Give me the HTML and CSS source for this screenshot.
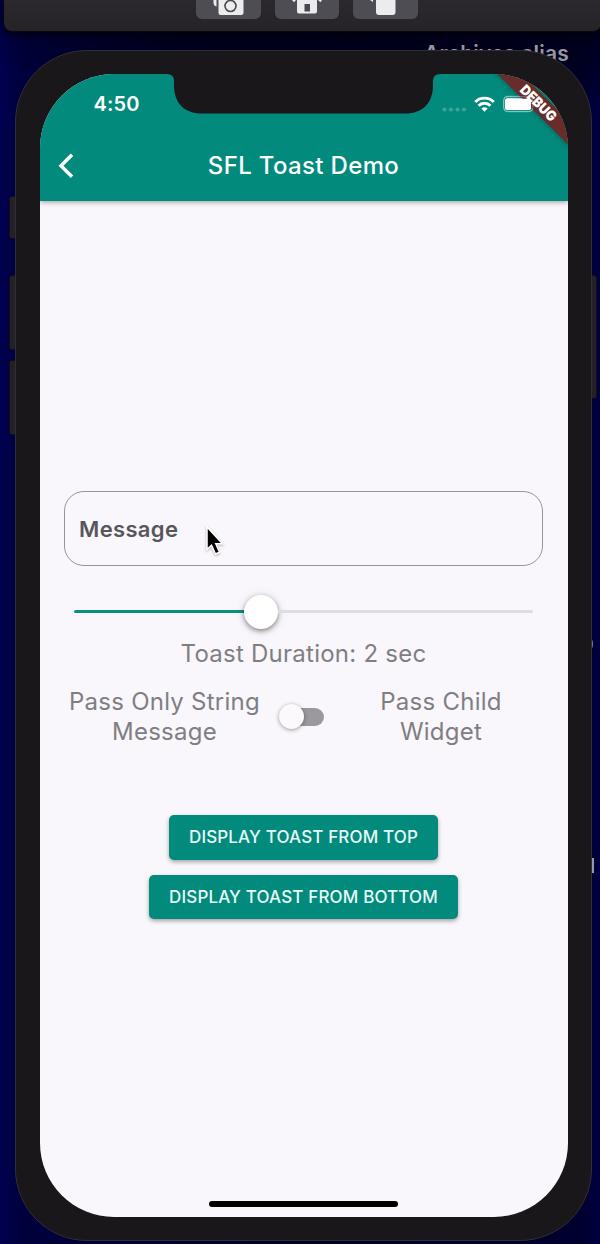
FILE: index.html
```html
<!DOCTYPE html>
<html lang="en">
<head>
<meta charset="utf-8">
<title>SFL Toast Demo</title>
<link rel="stylesheet" href="styles.css">
</head>
<body>
<div class="desktop">
  <span class="desktop-label">Archives alias</span>
  <span class="desktop-hint hint-dot"></span>
  <span class="desktop-hint hint-bar"></span>

  <div class="sim-toolbar">
    <span class="tool"><svg width="65" height="20" viewBox="0 0 65 20"><path d="M17.500 0h3v6.500q-3-.5-3-4zM22.500 0h25v12.500q0 2.500-2.500 2.500h-20q-2.500 0-2.500-2.500z" fill="#ececef"/><circle cx="34.500" cy="6" r="5.500" fill="none" stroke="#4b4950" stroke-width="1.600"/></svg></span>
    <span class="tool"><svg width="65" height="20" viewBox="0 0 65 20"><path d="M22 0h20v11.500q0 2-2 2H24q-2 0-2-2zM17 0h4l-2 2.300zM43 0h4l-1.500 2.300z" fill="#ececef"/><path d="M29.500 4h5.500v7.500h-5.500z" fill="#4b4950"/></svg></span>
    <span class="tool"><svg width="65" height="20" viewBox="0 0 65 20"><path d="M23 0h19.500v12q0 3-3 3H26q-3 0-3-3zM17 0h3v2z" fill="#ececef"/></svg></span>
  </div>

  <i class="side-key key-mute"></i>
  <i class="side-key key-up"></i>
  <i class="side-key key-down"></i>
  <i class="side-key key-power"></i>

  <div class="phone">
    <div class="screen">
      <header class="app-header">
        <div class="status-bar">
          <span class="clock">4:50</span>
          <span class="status-icons">
            <svg width="100" height="20" viewBox="0 0 100 20">
              <g fill="#3da497"><circle cx="4.500" cy="12.500" r="2.100"/><circle cx="11" cy="12.500" r="2.100"/><circle cx="17.500" cy="12.500" r="2.100"/><circle cx="24" cy="12.500" r="2.100"/></g>
              <g fill="none" stroke="#fff" stroke-width="2.900"><path d="M35.200 5a13 13 0 0 1 18.600 0"/><path d="M38.600 8.800a8.200 8.200 0 0 1 11.800 0"/></g>
              <path d="M41.400 11.500q3.100-2.400 6.200 0l-3.100 3.200z" fill="#fff"/>
              <rect x="63.800" y="-.7" width="29.500" height="15" rx="4" fill="none" stroke="#60b6ac" stroke-width="1.200"/>
              <rect x="65.500" y="1.200" width="26" height="11.300" rx="2" fill="#fff"/>
            </svg>
          </span>
        </div>
        <div class="nav-bar">
          <svg class="back" width="16" height="26" viewBox="0 0 16 26"><path d="M14 1.700L3 12.700l11 11" fill="none" stroke="#fff" stroke-width="3.500"/></svg>
          <h1 class="title">SFL Toast Demo</h1>
        </div>
      </header>

      <main class="content">
        <div class="field">Message</div>
        <div class="slider"><span class="slider-fill"></span><span class="slider-thumb"></span><span class="slider-rest"></span></div>
        <p class="duration">Toast Duration: 2 sec</p>
        <div class="mode">
          <span class="mode-left">Pass Only String<br>Message</span>
          <span class="switch"><span class="switch-thumb"></span></span>
          <span class="mode-right">Pass Child<br>Widget</span>
        </div>
        <button class="action action-top">DISPLAY TOAST FROM TOP</button>
        <button class="action action-bottom">DISPLAY TOAST FROM BOTTOM</button>
      </main>
      <span class="home-bar"></span>

      <svg class="notch" width="274" height="41" viewBox="0 0 274 41"><path d="M0-1H273V0Q266 0 266 7V11C266 29 256 39.500 238 39.500H35C17 39.500 7 29 7 11V7Q7 0 0 0z" fill="#19171a"/></svg>
      <svg class="debug" width="76" height="76" viewBox="0 0 76 76">
        <defs><filter id="banner-shadow" x="-20%" y="-60%" width="140%" height="220%"><feGaussianBlur stdDeviation="3"/></filter></defs>
        <g transform="rotate(45 46.500 29)">
          <rect x="-20" y="20.500" width="130" height="17" opacity=".35" filter="url(#banner-shadow)"/>
          <rect x="-20" y="20.500" width="130" height="17" fill="#692c2a"/>
        </g>
        <rect x="11.500" y="22.800" width="29.300" height="15" rx="4" fill="none" stroke="#fff" stroke-opacity=".3" stroke-width="1"/>
        <rect x="13" y="24.700" width="26" height="11.300" rx="2" fill="#fff"/>
        <g transform="rotate(45 46.500 29)">
          <text class="debug-text" x="46.500" y="34" text-anchor="middle" textLength="45" lengthAdjust="spacingAndGlyphs">DEBUG</text>
        </g>
      </svg>
    </div>
  </div>

  <svg class="cursor" width="24" height="36" viewBox="0 0 24 36"><path d="M3 3V25.500L7.500 21.300L11.500 30L15.500 28.300L11.800 19.800H18.500z" fill="#000" stroke="#fff" stroke-width="1.500"/></svg>
</div>
</body>
</html>
```
FILE: styles.css
```css
* { box-sizing: border-box; }

body {
  margin: 0;
  font-family: Inter, "Liberation Sans", sans-serif;
}

/* desktop canvas and the windows on it */
.desktop {
  position: relative;
  width: 600px;
  height: 1244px;
  overflow: hidden;
  background:
    radial-gradient(ellipse 420px 90px at 380px 30px, rgba(0, 0, 24, .9) 0, rgba(0, 0, 24, .8) 50%, transparent 100%),
    linear-gradient(90deg, #00004f 0, #00003e 20px, #000022 300px, #000030 585px, #000043 600px);
}
.desktop-label {
  position: absolute;
  left: 424px;
  top: 40px;
  font-size: 21px;
  line-height: 28px;
  font-weight: 600;
  letter-spacing: .25px;
  color: #9797a0;
  white-space: nowrap;
}
.desktop-hint { position: absolute; background: #77778a; }
.hint-dot { left: 588px; top: 639px; width: 5px; height: 10px; border-radius: 50%; }
.hint-bar { left: 591px; top: 858px; width: 3px; height: 15px; background: #9999a3; }

.sim-toolbar {
  position: absolute;
  left: 4px;
  top: 0;
  width: 597px;
  height: 31px;
  padding-left: 192px;
  display: flex;
  gap: 14px;
  background: linear-gradient(#2b292e, #252327);
  border-radius: 0 0 8px 8px;
  box-shadow: 0 0 0 1px #09090d, 0 3px 8px #00000c;
}
.tool {
  width: 64.500px;
  height: 19px;
  background: #4f4d54;
  border-radius: 0 0 6px 6px;
}
.tool svg { display: block; }

.phone {
  position: absolute;
  left: 15px;
  top: 50px;
  width: 577px;
  height: 1191px;
  padding: 23.500px 24.500px 24.500px;
  background: #19171a;
  border: 1px solid #302e38;
  border-radius: 72px;
}
.side-key {
  position: absolute;
  background: #232126;
  border: 1px solid #111015;
  border-radius: 3px;
  width: 12px;
  left: 9px;
}
.key-mute { top: 196px; height: 43px; }
.key-up { top: 275px; height: 75px; }
.key-down { top: 360px; height: 75px; }
.key-power { left: 586px; top: 275px; width: 11px; height: 124px; }

.screen {
  position: relative;
  display: flex;
  flex-direction: column;
  width: 528px;
  height: 1143px;
  margin: -1px;
  background: #f9f7fb;
  border-radius: 74px;
  overflow: hidden;
}

/* header */
.app-header {
  height: 127px;
  background: #028a7d;
  box-shadow: 0 1px 5px rgba(0, 0, 0, .4);
  color: #fff;
}
.status-bar {
  display: flex;
  justify-content: space-between;
  height: 60px;
  padding: 17px 28px 0 54px;
}
.clock { font-size: 20px; line-height: 27px; font-weight: 600; letter-spacing: .15px; }
.status-icons { padding-top: 6.500px; }
.status-icons svg { display: block; overflow: visible; }
.nav-bar {
  display: grid;
  grid-template-columns: 36px 1fr 36px;
  align-items: center;
  height: 65px;
}
.back { margin-left: 18px; }
.title {
  margin: 0;
  text-align: center;
  font-size: 24px;
  line-height: 32px;
  font-weight: 500;
  letter-spacing: .35px;
}

/* form */
.content {
  flex: 1;
  display: flex;
  flex-direction: column;
  align-items: center;
  padding: 290px 24.500px 0;
}
.field {
  width: 479px;
  height: 75px;
  padding-left: 14px;
  border: 1.500px solid #969498;
  border-radius: 20px;
  font-size: 22px;
  line-height: 74px;
  font-weight: 600;
  letter-spacing: .35px;
  color: #58565b;
}
.slider {
  display: flex;
  align-items: center;
  width: 459px;
  height: 36px;
  margin-top: 28px;
}
.slider-fill { width: 170px; height: 3px; background: #0b8e80; border-radius: 2px 0 0 2px; }
.slider-thumb {
  width: 34px;
  height: 34px;
  border-radius: 50%;
  background: #fff;
  box-shadow: 0 2px 5px rgba(0, 0, 0, .42), 0 1px 12px rgba(0, 0, 0, .12);
}
.slider-rest { flex: 1; height: 3px; background: #dedde0; border-radius: 0 2px 2px 0; }
.duration, .mode { font-size: 24px; line-height: 30px; color: #807e82; letter-spacing: .25px; }
.duration { margin: 9px 0 0; white-space: nowrap; }
.mode {
  display: grid;
  grid-template-columns: 201px 74px 204px;
  align-items: center;
  width: 479px;
  margin-top: 18px;
  text-align: center;
  white-space: nowrap;
}
.switch {
  display: flex;
  align-items: center;
  width: 45px;
  height: 18px;
  margin-left: 14px;
  background: linear-gradient(#9b999e, #9b999e) right / 36px 18px no-repeat;
  border-radius: 9px;
}
.switch-thumb {
  flex: none;
  width: 25px;
  height: 25px;
  border-radius: 50%;
  background: #fbf9fc;
  box-shadow: 0 1px 4px rgba(0, 0, 0, .38);
}
.action {
  border: 0;
  padding: 0;
  height: 44.500px;
  background: #028a7d;
  border-radius: 5px;
  box-shadow: 0 2px 4px rgba(0, 0, 0, .35);
  color: #e8fbf8;
  font: 500 17px/45px Inter, "Liberation Sans", sans-serif;
  letter-spacing: .15px;
  white-space: nowrap;
}
.action-top { width: 269px; margin-top: 68.500px; }
.action-bottom { width: 309px; margin-top: 15px; }

.home-bar {
  align-self: center;
  width: 189px;
  height: 6px;
  margin-bottom: 10px;
  background: #000;
  border-radius: 3px;
}

/* overlays */
.notch { position: absolute; left: 127px; top: 0; }
.debug { position: absolute; right: 0; top: 0; }
.debug-text { font-family: Inter, sans-serif; font-size: 14px; font-weight: 900; fill: #fff; }
.cursor { position: absolute; left: 204px; top: 524px; filter: drop-shadow(0 1px 1px rgba(0, 0, 0, .3)); }
```
